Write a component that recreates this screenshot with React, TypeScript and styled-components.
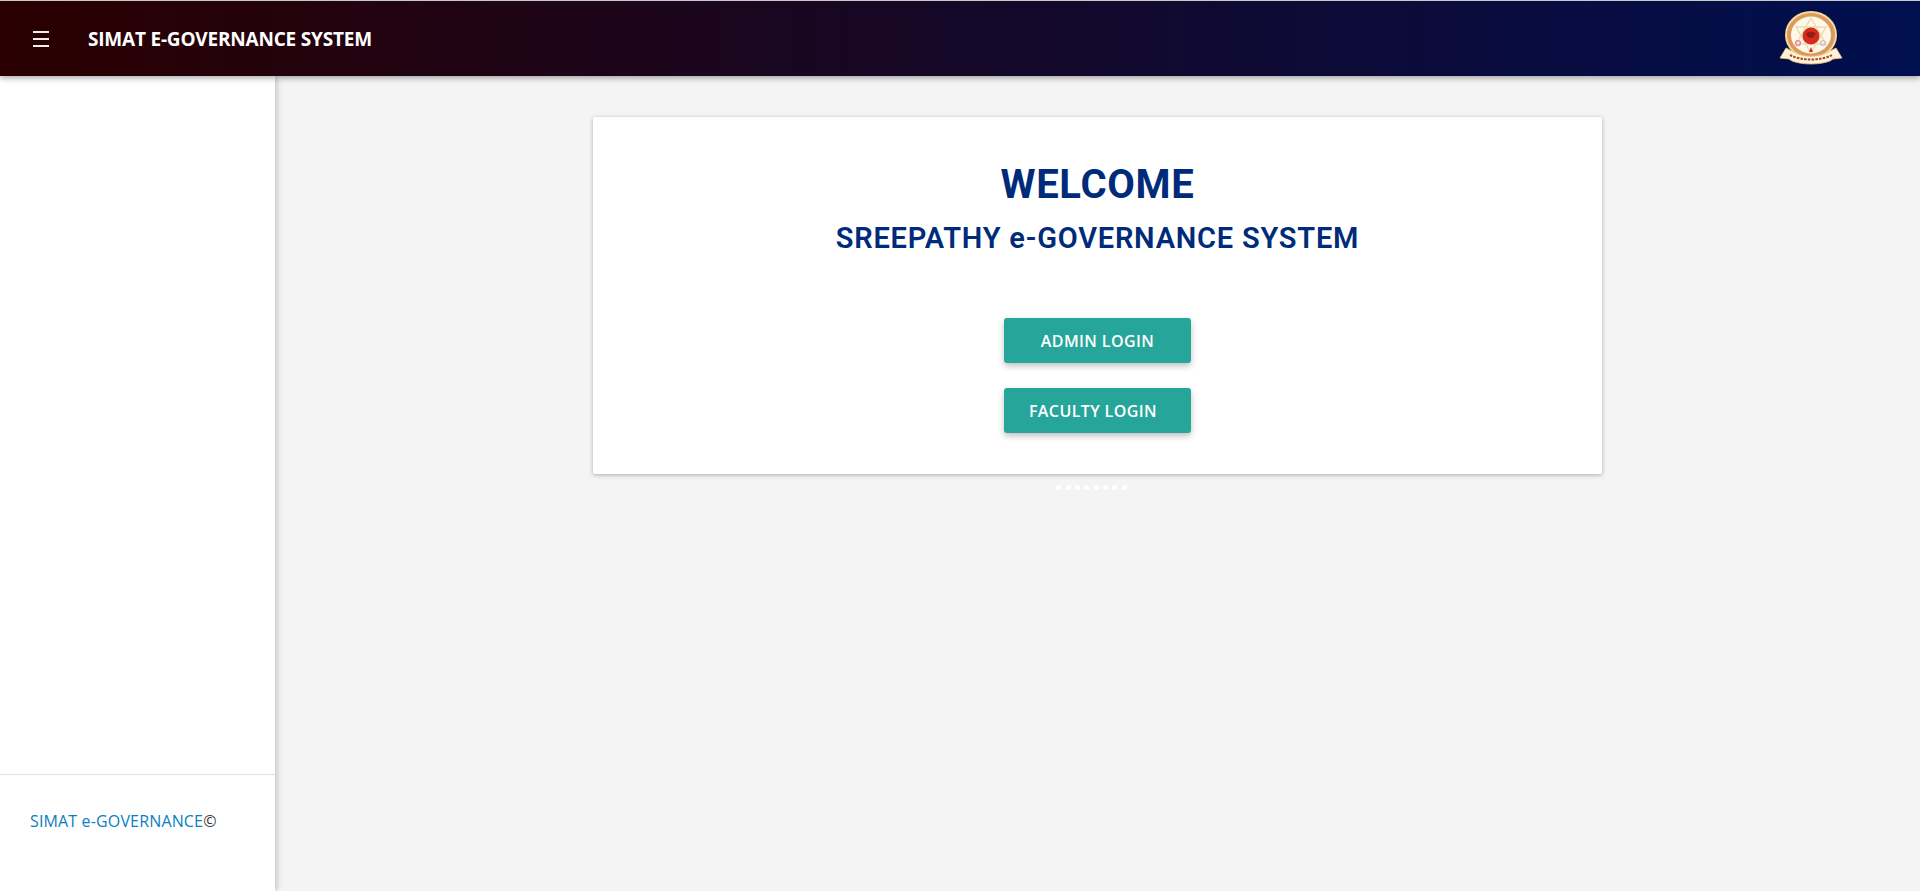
import React from 'react';
import styled, { createGlobalStyle } from 'styled-components';

const GlobalStyle = createGlobalStyle`
  html, body, #root {
    margin: 0;
    height: 100%;
  }
  body {
    background-color: #f4f4f4;
    font-family: 'Open Sans', 'Liberation Sans', sans-serif;
    overflow: hidden;
  }
`;

const Page = styled.div`
  display: flex;
  flex-direction: column;
  height: 891px;
`;

const Header = styled.header`
  display: flex;
  align-items: center;
  height: 75px;
  flex-shrink: 0;
  border-top: 1px solid #c9c9c9;
  background: linear-gradient(to right, #2a0000, #000f4f);
  box-shadow: 0 2px 6px rgba(0, 0, 0, 0.35);
  position: relative;
  z-index: 2;
`;

const MenuButton = styled.button`
  display: flex;
  flex-direction: column;
  gap: 5px;
  width: 16px;
  margin-left: 33px;
  padding: 0;
  border: 0;
  background: none;
`;

const MenuLine = styled.span`
  display: block;
  height: 2px;
  background-color: #f3eeee;
`;

const Title = styled.div`
  margin-left: 39px;
  color: #fff;
  font-size: 19px;
  font-weight: 700;
  letter-spacing: -0.2px;
`;

const LogoSlot = styled.div`
  margin-left: auto;
  margin-right: 77px;
  width: 64px;
  height: 58px;
`;

const Body = styled.div`
  display: flex;
  flex: 1;
  min-height: 0;
`;

const Sidebar = styled.aside`
  display: flex;
  flex-direction: column;
  justify-content: flex-end;
  width: 275px;
  flex-shrink: 0;
  background-color: #fff;
  box-shadow: 2px 0 6px rgba(0, 0, 0, 0.2);
  position: relative;
  z-index: 1;
`;

const SidebarFooter = styled.div`
  height: 117px;
  padding: 35px 0 0 30px;
  box-sizing: border-box;
  border-top: 1px solid #e0e0e0;
  font-size: 16px;
  letter-spacing: 0.15px;
  color: #333;
`;

const FooterLink = styled.span`
  color: #0b7dc1;
`;

const Main = styled.main`
  flex: 1;
  display: flex;
  flex-direction: column;
  align-items: center;
  padding-top: 41px;
`;

const Card = styled.section`
  display: flex;
  flex-direction: column;
  align-items: center;
  width: 1009px;
  height: 357px;
  box-sizing: border-box;
  padding-top: 46px;
  background-color: #fff;
  border-radius: 2px;
  box-shadow: 0 1px 4px rgba(0, 0, 0, 0.3);
`;

const Heading = styled.h1`
  margin: 0;
  color: #002b7a;
  font-family: Roboto, 'Liberation Sans', sans-serif;
  font-size: 40px;
  font-weight: 700;
  letter-spacing: 0.7px;
  line-height: 44px;
`;

const SubHeading = styled.h2`
  margin: 13px 0 0;
  color: #002b7a;
  font-family: Roboto, 'Liberation Sans', sans-serif;
  font-size: 29px;
  font-weight: 600;
  letter-spacing: 0.78px;
  line-height: 36px;
`;

const ButtonStack = styled.div`
  display: flex;
  flex-direction: column;
  gap: 25px;
  margin-top: 62px;
`;

const LoginButton = styled.button`
  width: 187px;
  height: 45px;
  padding: 0;
  border: 0;
  border-radius: 3px;
  background-color: #26a69a;
  color: #fff;
  font-family: 'Open Sans', sans-serif;
  font-size: 16px;
  font-weight: 600;
  letter-spacing: 0.4px;
  white-space: pre-wrap;
  box-shadow: 0 3px 6px rgba(0, 0, 0, 0.25);
  cursor: pointer;
`;

const Dots = styled.div`
  display: flex;
  gap: 4.4px;
  margin-top: 11px;
  margin-left: -12px;
`;

const Dot = styled.span`
  width: 5px;
  height: 5px;
  border-radius: 50%;
  background-color: #fff;
`;

const Logo = () => (
  <svg width="64" height="58" viewBox="0 0 64 58">
    <ellipse cx="32" cy="25" rx="26" ry="24" fill="#f6d9a0" />
    <ellipse cx="32" cy="25" rx="24" ry="22" fill="#d99a5b" />
    <ellipse cx="32" cy="25" rx="20" ry="18.5" fill="#fff8e8" />
    <polygon points="32,8 47,34 17,34" fill="none" stroke="#eadcae" strokeWidth="1.4" />
    <polygon points="32,43 47,17 17,17" fill="none" stroke="#eadcae" strokeWidth="1.4" />
    <circle cx="32" cy="26" r="8.5" fill="#d62a1e" />
    <path d="M27 24c2-3 8-3 10 0-2 1-2 4-5 4-3 0-4-2-5-4z" fill="#8f1f13" />
    <circle cx="19" cy="33" r="2.4" fill="none" stroke="#ef7da8" strokeWidth="1.4" />
    <circle cx="44" cy="33" r="2.4" fill="none" stroke="#d9bccb" strokeWidth="1.4" />
    <path d="M32 37l2 5h-4z" fill="#c9352a" />
    <path d="M1 48l6-10 6 3c10 7 28 7 38 0l6-3 6 10-9 1-3 2c-10 4-28 4-38 0l-3-2z" fill="#fff3d6" stroke="#e8bd7c" strokeWidth="0.8" />
    <path d="M11 45c11 6 31 6 42 0" fill="none" stroke="#a4482f" strokeWidth="2" strokeDasharray="2.5 1.2" />
  </svg>
);

export default function App() {
  return (
    <Page>
      <GlobalStyle />
      <Header>
        <MenuButton aria-label="menu">
          <MenuLine />
          <MenuLine />
          <MenuLine />
        </MenuButton>
        <Title>SIMAT E-GOVERNANCE SYSTEM</Title>
        <LogoSlot>
          <Logo />
        </LogoSlot>
      </Header>
      <Body>
        <Sidebar>
          <SidebarFooter>
            <FooterLink>SIMAT e-GOVERNANCE</FooterLink>©
          </SidebarFooter>
        </Sidebar>
        <Main>
          <Card>
            <Heading>WELCOME</Heading>
            <SubHeading>SREEPATHY e-GOVERNANCE SYSTEM</SubHeading>
            <ButtonStack>
              <LoginButton>ADMIN LOGIN</LoginButton>
              <LoginButton>{'FACULTY LOGIN\u00a0\u00a0'}</LoginButton>
            </ButtonStack>
          </Card>
          <Dots>
            {Array.from({ length: 8 }, (_, i) => (
              <Dot key={i} />
            ))}
          </Dots>
        </Main>
      </Body>
    </Page>
  );
}
